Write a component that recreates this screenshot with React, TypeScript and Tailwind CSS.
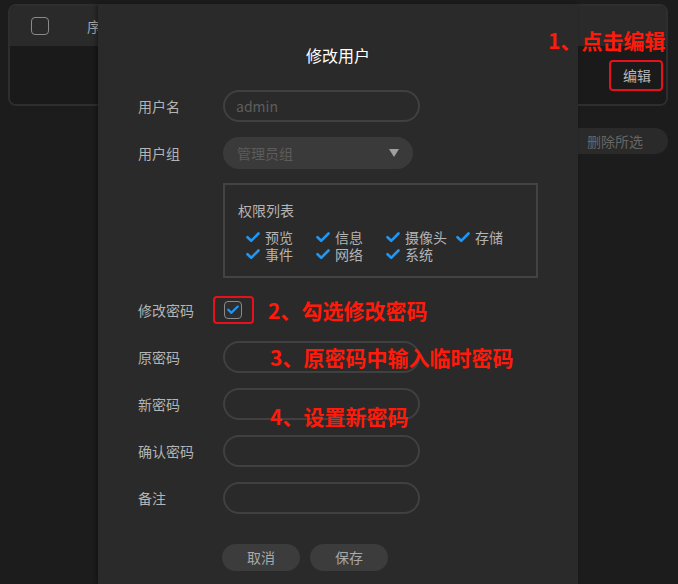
import React from "react";

const FONT = { fontFamily: '"Microsoft YaHei", "Noto Sans CJK SC", "Liberation Sans", sans-serif' };

function Tick({ className = "" }: { className?: string }) {
  return (
    <svg viewBox="0 0 14 11" className={className} fill="none">
      <path d="M1.5 5.2 L5.2 8.8 L12.5 1.5" stroke="#2196f3" strokeWidth="2.6" strokeLinecap="round" strokeLinejoin="round" />
    </svg>
  );
}

function Row({ label, children, className = "" }: { label: string; children: React.ReactNode; className?: string }) {
  return (
    <div className={`flex items-center h-[32px] ${className}`}>
      <div className="w-[85px] text-[14px] text-[#b4b4b4]">{label}</div>
      {children}
    </div>
  );
}

function Input({ placeholder }: { placeholder?: string }) {
  return (
    <div className="w-[197px] h-[32px] rounded-full border-2 border-[#404040] flex items-center pl-[11px] text-[14px] text-[#5e5e5e]">
      {placeholder}
    </div>
  );
}

const perms = [
  ["预览", "信息", "摄像头", "存储"],
  ["事件", "网络", "系统"],
];

export default function App() {
  return (
    <div className="relative w-[678px] h-[584px] overflow-hidden bg-[#1c1c1c]" style={FONT}>
      {/* background page */}
      <div className="pt-[4px] pl-[8px] pr-[10px]">
        <div className="h-[102px] rounded-[8px] border-2 border-[#2e2e2e] overflow-hidden flex flex-col">
          <div className="h-[40px] bg-[#2a2a2a] flex items-center pl-[21px]">
            <div className="w-[18px] h-[18px] rounded-[4px] border-[1.5px] border-[#8a8a8a]" />
            <span className="ml-[38px] text-[14px] text-[#a8a8a8]">序号</span>
          </div>
          <div className="flex-1 bg-[#1a1a1a] flex items-center justify-end pr-[15px]">
            <span className="text-[14px] text-[#b8b8b8]">编辑</span>
          </div>
        </div>
        <div className="mt-[22px] flex justify-end">
          <div className="w-[106px] h-[26px] rounded-full bg-[#2a2a2a] flex items-center justify-center text-[14px] text-[#666]">
            删除所选
          </div>
        </div>
      </div>

      {/* modal */}
      <div className="absolute left-[98px] top-[4px] w-[480px] bottom-0 bg-[#2a2a2a] shadow-[-2px_0_4px_rgba(0,0,0,0.35)] flex flex-col pl-[40px]">
        <div className="mt-[40px] -ml-[40px] leading-[22px] text-[16px] text-white text-center">修改用户</div>

        <Row label="用户名" className="mt-[24px]">
          <Input placeholder="admin" />
        </Row>

        <Row label="用户组" className="mt-[15px]">
          <div className="w-[190px] h-[32px] rounded-full bg-[#3a3a3a] flex items-center justify-between pl-[14px] pr-[14px] text-[14px] text-[#5c5c5c]">
            <span>管理员组</span>
            <svg viewBox="0 0 10 8" className="w-[10px] h-[8px]">
              <path d="M0 0 H10 L5 8 Z" fill="#a0a0a0" />
            </svg>
          </div>
        </Row>

        <div className="mt-[14px] ml-[85px] w-[315px] h-[95px] border-2 border-[#434343] pl-[13px] pt-[15px]">
          <div className="leading-[20px] text-[14px] text-[#b4b4b4]">权限列表</div>
          <div className="mt-[9px] ml-[8px]">
            {perms.map((row, i) => (
              <div key={i} className="flex h-[17px] items-center">
                {row.map((p) => (
                  <div key={p} className="w-[70px] h-[17px] flex items-center">
                    <Tick className="w-[14px] h-[11px]" />
                    <span className="ml-[5px] text-[14px] leading-[17px] text-[#b4b4b4]">{p}</span>
                  </div>
                ))}
              </div>
            ))}
          </div>
        </div>

        <Row label="修改密码" className="mt-[16px]">
          <div className="w-[18px] h-[18px] ml-[1px] rounded-[4px] border-[1.5px] border-[#8a8a8a] bg-[#2e2e2e] flex items-center justify-center">
            <Tick className="w-[12px] h-[10px]" />
          </div>
        </Row>
        <Row label="原密码" className="mt-[15px]"><Input /></Row>
        <Row label="新密码" className="mt-[15px]"><Input /></Row>
        <Row label="确认密码" className="mt-[15px]"><Input /></Row>
        <Row label="备注" className="mt-[15px]"><Input /></Row>

        <div className="mt-[30px] ml-[84px] flex gap-[10px]">
          <div className="w-[78px] h-[27px] rounded-full bg-[#3c3c3c] flex items-center justify-center text-[14px] text-[#a8a8a8]">取消</div>
          <div className="w-[78px] h-[27px] rounded-full bg-[#3c3c3c] flex items-center justify-center text-[14px] text-[#a8a8a8]">保存</div>
        </div>
      </div>

      {/* annotations */}
      <div className="absolute left-[609px] top-[60px] w-[54px] h-[31px] rounded-[4px] border-2 border-[#e8101a]" />
      <div className="absolute left-[213px] top-[296px] w-[41px] h-[28px] rounded-[4px] border-2 border-[#e8101a]" />
      <div className="absolute left-[548px] top-[28px] leading-[24px] text-[21px] font-bold text-[#ff1a0a]">1、点击编辑</div>
      <div className="absolute left-[268px] top-[298px] leading-[24px] text-[21px] font-bold text-[#ff1a0a]">2、勾选修改密码</div>
      <div className="absolute left-[270px] top-[345px] leading-[24px] text-[21px] font-bold text-[#ff1a0a]">3、原密码中输入临时密码</div>
      <div className="absolute left-[270px] top-[404px] leading-[24px] text-[21px] font-bold text-[#ff1a0a]">4、设置新密码</div>
    </div>
  );
}
